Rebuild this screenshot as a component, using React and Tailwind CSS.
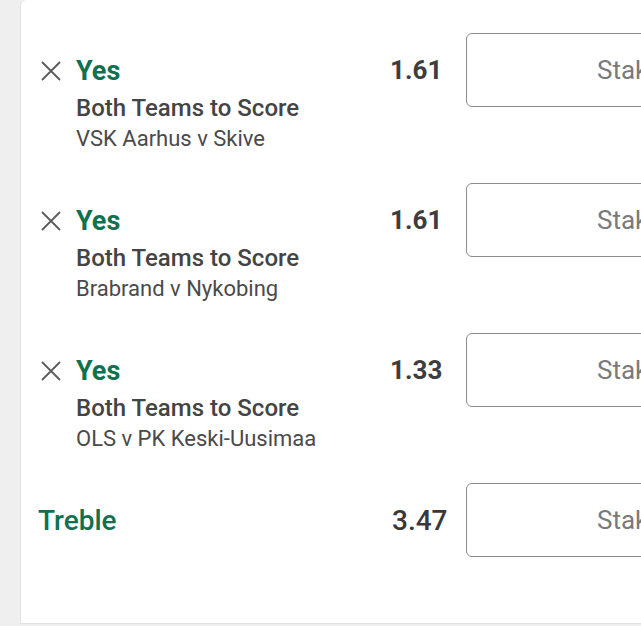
import React from "react";

const legs = [
  { odds: "1.61", match: "VSK Aarhus v Skive" },
  { odds: "1.61", match: "Brabrand v Nykobing" },
  { odds: "1.33", match: "OLS v PK Keski-Uusimaa" },
];

function CloseIcon() {
  return (
    <svg width="22" height="22" viewBox="0 0 22 22" className="mt-[4px] shrink-0">
      <path d="M2 2 L20 20 M20 2 L2 20" stroke="#5a5a5a" strokeWidth="1.8" fill="none" />
    </svg>
  );
}

function StakeBox() {
  return (
    <div className="h-[74px] w-[220px] shrink-0 rounded-[6px] border border-[#8c8c8c] bg-white pl-[130px] flex items-center">
      <span className="text-[26px] text-[#7a7a7a] leading-[30px]">Stake</span>
    </div>
  );
}

export default function App() {
  return (
    <div
      className="w-[641px] h-[626px] bg-[#efefef] overflow-hidden"
      style={{ fontFamily: "Roboto, 'Noto Sans', sans-serif" }}
    >
      <div className="ml-[20px] w-[660px] h-[624px] bg-white rounded-tl-[6px] border-l border-b border-[#e2e2e2] pt-[33px]">
        {legs.map((leg, i) => (
          <div key={i} className="flex h-[150px]">
            <div className="flex w-[369px] shrink-0 pl-[19px] pt-[23px]">
              <CloseIcon />
              <div className="ml-[14px] flex flex-col">
                <span className="text-[27px] leading-[30px] font-bold text-[#0f7150]">Yes</span>
                <span className="mt-[8px] text-[24px] leading-[28px] font-medium text-[#444444]">
                  Both Teams to Score
                </span>
                <span className="mt-[4px] text-[22px] leading-[26px] text-[#4a4a4a]">{leg.match}</span>
              </div>
            </div>
            <div className="w-[76px] shrink-0 pt-[22px]">
              <span className="text-[26px] leading-[30px] font-bold text-[#3d3d3d]">{leg.odds}</span>
            </div>
            <StakeBox />
          </div>
        ))}
        <div className="flex h-[150px]">
          <div className="w-[371px] shrink-0 pl-[17px] pt-[22px]">
            <span className="text-[28px] leading-[32px] font-medium text-[#0f7150]">Treble</span>
          </div>
          <div className="w-[74px] shrink-0 pt-[22px]">
            <span className="text-[28px] leading-[32px] font-medium text-[#383838]">3.47</span>
          </div>
          <StakeBox />
        </div>
      </div>
    </div>
  );
}
